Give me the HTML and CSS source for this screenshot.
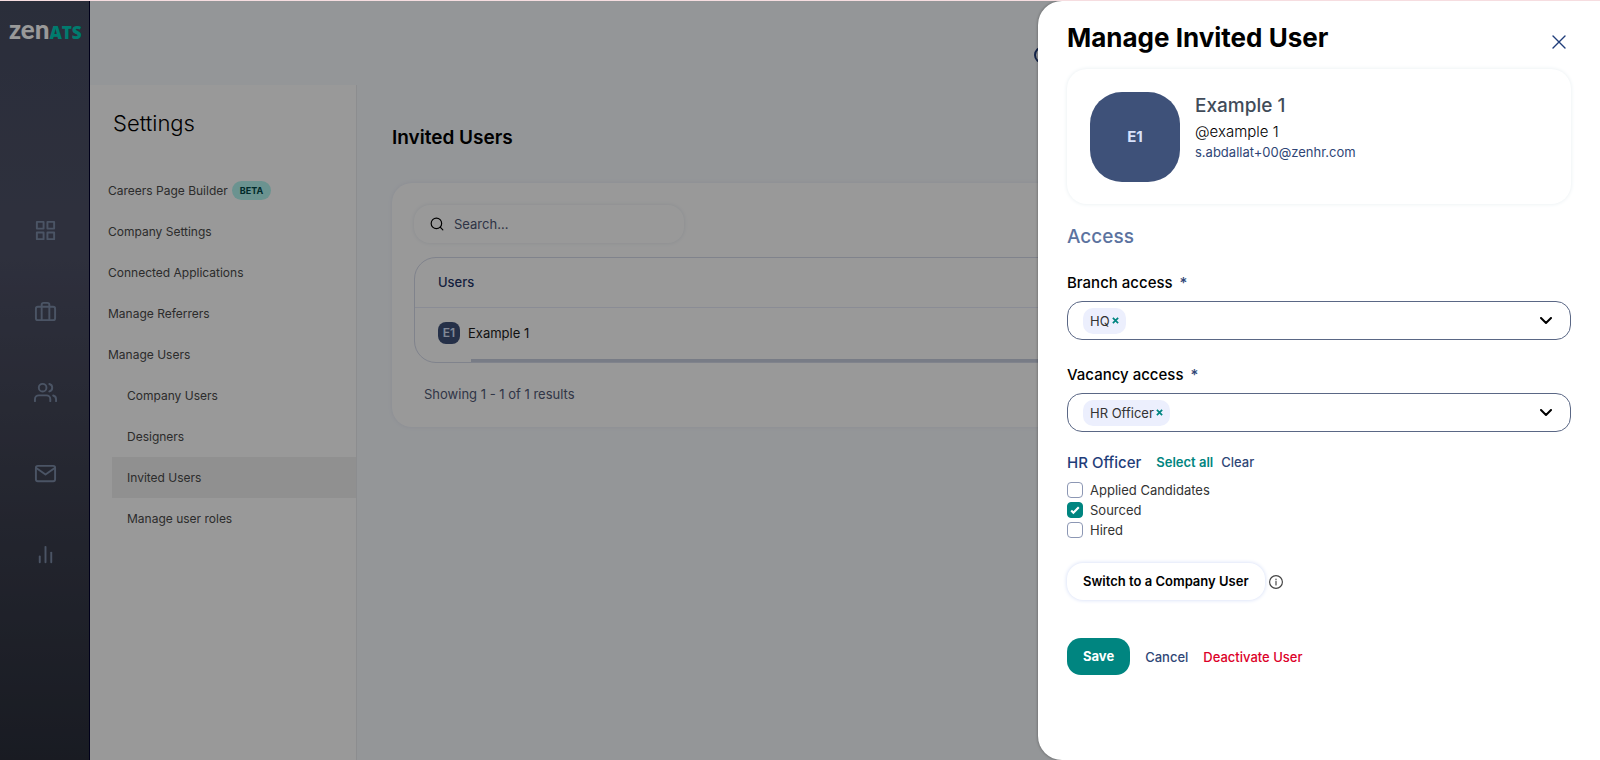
FILE: index.html
```
<!DOCTYPE html>
<html lang="en">
<head>
  <meta charset="UTF-8" />
  <meta name="viewport" content="width=device-width, initial-scale=1.0"/>
  <title>ZenATS - Invited Users</title>
  <link rel="stylesheet" href="styles.css">
</head>
<body>
  <div class="app">
    <nav class="sidebar" aria-label="Main">
      <a class="logo" href="#"><span class="logo-zen">zen</span><span class="logo-ats">ATS</span></a>
      <div class="sidebar-links">
        <a href="#" aria-label="Dashboard">
          <svg class="icon" viewBox="0 0 24 24"><rect x="3" y="3" width="7" height="7"/><rect x="14" y="3" width="7" height="7"/><rect x="14" y="14" width="7" height="7"/><rect x="3" y="14" width="7" height="7"/></svg>
        </a>
        <a href="#" aria-label="Vacancies">
          <svg class="icon" viewBox="0 0 24 24"><rect x="2" y="7" width="20" height="14" rx="2"/><path d="M16 21V5a2 2 0 0 0-2-2h-4a2 2 0 0 0-2 2v16"/></svg>
        </a>
        <a href="#" aria-label="Candidates">
          <svg class="icon" viewBox="0 0 24 24"><path d="M17 21v-2a4 4 0 0 0-4-4H5a4 4 0 0 0-4 4v2"/><circle cx="9" cy="7" r="4"/><path d="M23 21v-2a4 4 0 0 0-3-3.87"/><path d="M16 3.13a4 4 0 0 1 0 7.75"/></svg>
        </a>
        <a href="#" aria-label="Inbox">
          <svg class="icon" viewBox="0 0 24 24"><rect x="2" y="4" width="20" height="16" rx="2"/><path d="M22 6l-10 7L2 6"/></svg>
        </a>
        <a href="#" aria-label="Reports">
          <svg class="icon" viewBox="0 0 24 24"><path d="M18 20V10"/><path d="M12 20V4"/><path d="M6 20v-6"/></svg>
        </a>
      </div>
    </nav>

    <div class="page">
      <header class="topbar">
        <button class="topbar-button" type="button" aria-label="Search">
          <svg class="icon" viewBox="0 0 24 24"><circle cx="11" cy="11" r="8"/><path d="M21 21l-4.3-4.3"/></svg>
        </button>
      </header>

      <div class="columns">
        <aside class="settings">
          <h2>Settings</h2>
          <ul class="menu">
            <li><a href="#">Careers Page Builder <span class="beta">BETA</span></a></li>
            <li><a href="#">Company Settings</a></li>
            <li><a href="#">Connected Applications</a></li>
            <li><a href="#">Manage Referrers</a></li>
            <li>
              <a href="#">Manage Users</a>
              <ul class="submenu">
                <li><a href="#">Company Users</a></li>
                <li><a href="#">Designers</a></li>
                <li><a class="active" href="#">Invited Users</a></li>
                <li><a href="#">Manage user roles</a></li>
              </ul>
            </li>
          </ul>
        </aside>

        <main class="content">
          <h1>Invited Users</h1>
          <section class="card">
            <label class="search">
              <svg class="icon" viewBox="0 0 24 24"><circle cx="11" cy="11" r="9"/><path d="M22 22l-4.5-4.5"/></svg>
              <input type="search" placeholder="Search..." aria-label="Search">
            </label>
            <div class="table-wrap">
              <table>
                <thead>
                  <tr><th>Users</th></tr>
                </thead>
                <tbody>
                  <tr><td><div class="user"><span class="avatar-small">E1</span>Example 1</div></td></tr>
                </tbody>
              </table>
              <div class="scrollbar"></div>
            </div>
            <p class="results">Showing 1 - 1 of 1 results</p>
          </section>
        </main>
      </div>
    </div>
  </div>

  <div class="overlay">
    <section class="drawer" role="dialog" aria-labelledby="drawer-title">
      <header class="drawer-header">
        <h2 id="drawer-title">Manage Invited User</h2>
        <button class="close" type="button" aria-label="Close">
          <svg class="icon" viewBox="0 0 14 14"><path d="M1 1l12 12M13 1L1 13"/></svg>
        </button>
      </header>

      <div class="profile">
        <div class="avatar">E1</div>
        <div class="profile-info">
          <h3>Example 1</h3>
          <p>@example 1</p>
          <a href="mailto:s.abdallat+00@zenhr.com">s.abdallat+00@zenhr.com</a>
        </div>
      </div>

      <form class="access">
        <h3 class="access-title">Access</h3>

        <div class="field">
          <label for="branch">Branch access <span class="required">*</span></label>
          <div class="multiselect">
            <span class="chip">HQ<button type="button" aria-label="Remove HQ"><svg class="icon" viewBox="0 0 8 8"><path d="M1 1l6 6M7 1L1 7"/></svg></button></span>
            <select id="branch"><option></option></select>
            <svg class="icon chevron" viewBox="0 0 12 8"><path d="M1 1l5 5 5-5"/></svg>
          </div>
        </div>

        <div class="field">
          <label for="vacancy">Vacancy access <span class="required">*</span></label>
          <div class="multiselect">
            <span class="chip">HR Officer<button type="button" aria-label="Remove HR Officer"><svg class="icon" viewBox="0 0 8 8"><path d="M1 1l6 6M7 1L1 7"/></svg></button></span>
            <select id="vacancy"><option></option></select>
            <svg class="icon chevron" viewBox="0 0 12 8"><path d="M1 1l5 5 5-5"/></svg>
          </div>
        </div>

        <div class="stages">
          <div class="stages-header">
            <h4>HR Officer</h4>
            <button class="select-all" type="button">Select all</button>
            <button class="clear" type="button">Clear</button>
          </div>
          <label><input type="checkbox">Applied Candidates</label>
          <label><input type="checkbox" checked>Sourced</label>
          <label><input type="checkbox">Hired</label>
        </div>

        <div class="switch-row">
          <button class="switch" type="button">Switch to a Company User</button>
          <svg class="icon info" viewBox="0 0 24 24"><circle cx="12" cy="12" r="11"/><path d="M12 17v-6M12 7v1"/></svg>
        </div>

        <div class="actions">
          <button class="save" type="submit">Save</button>
          <button class="cancel" type="button">Cancel</button>
          <button class="deactivate" type="button">Deactivate User</button>
        </div>
      </form>
    </section>
  </div>
</body>
</html>
```
FILE: styles.css
```
* {
  box-sizing: border-box;
}

body {
  margin: 0;
  font-family: 'Inter', sans-serif;
  font-size: 13px;
  color: #000;
  border-top: 1px solid #f6dde0;
  height: 100vh;
  overflow: hidden;
  position: relative;
}

h1, h2, h3, h4, p, ul {
  margin: 0;
  padding: 0;
}

ul {
  list-style: none;
}

a {
  color: inherit;
  text-decoration: none;
}

button {
  font: inherit;
  color: inherit;
  background: none;
  border: 0;
  padding: 0;
  cursor: pointer;
}

.icon {
  display: block;
  fill: none;
  stroke: currentColor;
  stroke-width: 2;
  stroke-linecap: round;
  stroke-linejoin: round;
}

.app {
  display: flex;
  height: 100%;
  background: #f7fafd;
}

/* left rail */
.sidebar {
  width: 90px;
  background: linear-gradient(#474d62 0%, #4e5167 32%, #424556 56%, #2a2e3a 100%);
  box-shadow: inset -1px 0 #00002a;
  color: #7d8da8;
}

.logo {
  display: flex;
  align-items: baseline;
  padding: 12px 0 0 9px;
  height: 160px;
  line-height: 32px;
}

.logo-zen {
  font-family: 'Lato', sans-serif;
  font-size: 26px;
  font-weight: 900;
  color: #fff;
}

.logo-ats {
  font-family: 'Open Sans', sans-serif;
  font-size: 17px;
  font-weight: 800;
  color: #00cdb8;
}

.sidebar-links {
  display: flex;
  flex-direction: column;
  align-items: center;
  gap: 58px;
  padding-top: 58px;
}

.sidebar-links .icon {
  width: 23px;
  height: 23px;
}

.page {
  flex: 1;
  display: flex;
  flex-direction: column;
}

.topbar {
  height: 84px;
  display: flex;
  align-items: center;
  justify-content: flex-end;
  padding: 26px 544px 0 0;
  color: #1f3a78;
}

.topbar-button .icon {
  width: 24px;
  height: 24px;
}

.columns {
  flex: 1;
  display: flex;
}

/* settings menu */
.settings {
  width: 267px;
  background: #fff;
  border-right: 1px solid #e9ebee;
}

.settings h2 {
  padding: 22px 23px 0;
  font-size: 22px;
  line-height: 32px;
  font-weight: 300;
}

.menu {
  padding-top: 31px;
  color: #4a4a4a;
  font-size: 12px;
}

.menu a {
  display: flex;
  align-items: center;
  gap: 4px;
  height: 41px;
  padding-left: 18px;
}

.submenu {
  padding-left: 22px;
}

.submenu a {
  padding-left: 15px;
}

.submenu .active {
  background: #f0f0f0;
}

.beta {
  padding: 0 8px;
  border-radius: 10px;
  background: #b3f5f0;
  color: #004747;
  font-size: 9px;
  line-height: 19px;
  font-weight: 700;
}

.content {
  flex: 1;
  padding: 37px 35px;
}

.content h1 {
  font-size: 19px;
  line-height: 32px;
  font-weight: 600;
}

.card {
  margin-top: 29px;
  padding: 22px 22px 21px;
  border-radius: 20px;
  background: #fff;
  box-shadow: 0 0 4px #e6eaf8;
}

.search {
  display: flex;
  align-items: center;
  gap: 8px;
  width: 270px;
  height: 38px;
  padding: 0 16px;
  border-radius: 16px;
  box-shadow: 0 0 4px #e6eaf0;
}

.search .icon {
  width: 14px;
  height: 14px;
}

.search input {
  flex: 1;
  min-width: 0;
  border: 0;
  outline: 0;
  background: none;
  font: 400 13px 'Inter', sans-serif;
}

.search input::placeholder {
  color: #4f5874;
}

.table-wrap {
  margin-top: 14px;
  border: 1px solid #d5daea;
  border-radius: 22px;
  overflow: hidden;
}

table {
  width: 100%;
  border-collapse: collapse;
}

th {
  height: 49px;
  padding: 0 23px;
  border-bottom: 1px solid #e6eaf8;
  color: #1f3468;
  font-weight: 500;
  text-align: left;
}

td {
  height: 52px;
  padding: 0 23px;
  color: #1c1c1c;
}

.user {
  display: flex;
  align-items: center;
  gap: 8px;
}

.avatar-small {
  width: 22px;
  height: 22px;
  border-radius: 8px;
  background: #3e5179;
  color: #d8e2fb;
  font-size: 12px;
  line-height: 22px;
  font-weight: 600;
  text-align: center;
}

.scrollbar {
  height: 3px;
  margin-left: 56px;
  background: #c9cfe0;
}

.results {
  padding: 19px 10px 0;
  color: #525a76;
  line-height: 24px;
}

/* drawer */
.overlay {
  position: absolute;
  inset: 0;
  display: flex;
  justify-content: flex-end;
  background: rgba(0, 0, 0, 0.4);
}

.drawer {
  width: 562px;
  padding: 20px 29px;
  border-radius: 24px 0 0 24px;
  background: #fff;
  box-shadow: 0 0 3px rgba(0, 0, 0, 0.4);
}

.drawer-header {
  display: flex;
  align-items: center;
  justify-content: space-between;
  height: 34px;
}

.drawer-header h2 {
  font-size: 26px;
  line-height: 34px;
  font-weight: 700;
}

.close {
  padding: 8px 5px 0;
  color: #1f3d7a;
}

.close .icon {
  width: 14px;
  height: 14px;
  stroke-width: 1.4;
}

.profile {
  display: flex;
  gap: 15px;
  height: 135px;
  margin-top: 14px;
  padding: 23px;
  border-radius: 20px;
  box-shadow: 0 0 4px #e6edf0;
}

.avatar {
  width: 90px;
  height: 90px;
  border-radius: 32px;
  background: #3e5179;
  color: #d8e2fb;
  font-size: 15px;
  line-height: 90px;
  font-weight: 700;
  text-align: center;
}

.profile-info h3 {
  color: #414b59;
  font-size: 19px;
  line-height: 28px;
  font-weight: 500;
}

.profile-info p {
  font-size: 15px;
  line-height: 23px;
  font-weight: 300;
}

.profile-info a {
  display: block;
  color: #2f4676;
  font-size: 13px;
  line-height: 18px;
}

.access-title {
  margin-top: 19px;
  color: #5c73a0;
  font-size: 19px;
  line-height: 28px;
  font-weight: 500;
}

.field {
  margin-top: 20px;
}

.field label {
  display: block;
  font-size: 15px;
  line-height: 24px;
  font-weight: 500;
}

.required {
  margin-left: 3px;
  color: #2f4676;
}

.multiselect {
  display: flex;
  align-items: center;
  height: 39px;
  margin-top: 6px;
  padding: 0 18px 0 15px;
  border: 1px solid #5a6785;
  border-radius: 15px;
}

.field + .field {
  margin-top: 23px;
}

.chip {
  display: flex;
  align-items: center;
  gap: 2px;
  padding: 0 7px;
  border-radius: 10px;
  background: #eceffd;
  color: #333;
  line-height: 26px;
}

.chip button {
  color: #008580;
}

.chip .icon {
  width: 7px;
  height: 7px;
  stroke-linecap: butt;
}

.multiselect select {
  flex: 1;
  height: 100%;
  border: 0;
  outline: 0;
  background: none;
  appearance: none;
}

.chevron {
  width: 12px;
  height: 8px;
}

.stages {
  margin-top: 18px;
}

.stages-header {
  display: flex;
  align-items: center;
  height: 24px;
  margin-bottom: 6px;
  font-weight: 500;
}

.stages-header h4 {
  margin-right: 15px;
  color: #1f3d7a;
  font-size: 15px;
  font-weight: 500;
}

.select-all {
  margin-right: 8px;
  color: #008580;
  font-weight: 600;
}

.clear {
  color: #2f4676;
}

.stages label {
  display: flex;
  align-items: center;
  gap: 7px;
  height: 20px;
  color: #333;
}

.stages input {
  appearance: none;
  width: 16px;
  height: 16px;
  margin: 0;
  border: 1px solid #8c97b4;
  border-radius: 4px;
}

.stages input:checked {
  border-color: #008580;
  background: #008580 url("data:image/svg+xml,%3Csvg xmlns='http://www.w3.org/2000/svg' viewBox='0 0 13 13' fill='none' stroke='white' stroke-width='2'%3E%3Cpath d='M3 7l2 2 5-5'/%3E%3C/svg%3E") center no-repeat;
}

.switch-row {
  display: flex;
  align-items: center;
  gap: 4px;
  margin-top: 23px;
}

.switch {
  padding: 0 16px;
  border-radius: 16px;
  box-shadow: 0 0 4px #cfd9f5;
  line-height: 37px;
  font-weight: 600;
}

.info {
  width: 14px;
  height: 14px;
  color: #444;
}

.actions {
  display: flex;
  align-items: center;
  gap: 15px;
  margin-top: 38px;
  font-weight: 500;
}

.save {
  padding: 0 16px;
  border-radius: 14px;
  background: #008580;
  color: #fff;
  line-height: 37px;
  font-weight: 700;
}

.cancel {
  color: #2f4676;
}

.deactivate {
  color: #dc0028;
}
```
